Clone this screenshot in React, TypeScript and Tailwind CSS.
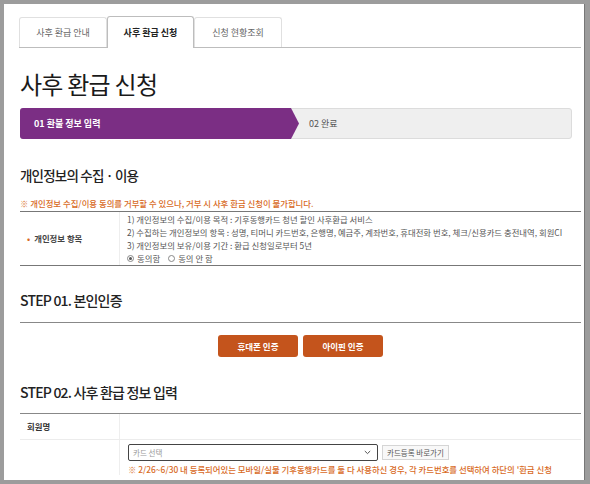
import React from "react";

const tabs = ["사후 환급 안내", "사후 환급 신청", "신청 현황조회"];

function Tabs() {
  return (
    <div className="mt-[12px] -ml-px flex items-end border-b border-[#bdbdbd]">
      {tabs.map((t, i) =>
        i === 1 ? (
          <div
            key={t}
            className="-mb-px flex h-[32px] w-[87px] items-center justify-center rounded-t-[3px] border border-b-0 border-[#bdbdbd] bg-white text-[9px] font-bold text-[#222]"
          >
            {t}
          </div>
        ) : (
          <div
            key={t}
            className="flex h-[30px] w-[88px] items-center justify-center rounded-t-[3px] border border-b-0 border-[#e0e0e0] bg-white text-[9px] text-[#666]"
          >
            {t}
          </div>
        )
      )}
    </div>
  );
}

function Steps() {
  return (
    <div className="relative mt-[9px] mr-[9px] flex h-[31px] items-center rounded-[3px] border border-[#dcdcdc] bg-[#efefef]">
      <div className="absolute -left-px -top-px flex h-[31px] w-[279px] items-center rounded-l-[3px] bg-[#7b2e84] pl-[14px] text-[9px] font-bold text-white [clip-path:polygon(0_0,calc(100%-8px)_0,100%_50%,calc(100%-8px)_100%,0_100%)]">
        01 환불 정보 입력
      </div>
      <div className="ml-[288px] text-[9px] text-[#555]">02 완료</div>
    </div>
  );
}

function Radio({ checked }: { checked?: boolean }) {
  return (
    <span className="mr-[3px] inline-flex h-[7px] w-[7px] items-center justify-center rounded-full border border-[#888] bg-white">
      {checked && <span className="h-[3px] w-[3px] rounded-full bg-[#555]" />}
    </span>
  );
}

export default function App() {
  return (
    <div className="h-[484px] w-[590px] bg-[#9c9c9c] pb-[4px] pl-[4px] pr-[5px] pt-[4px] font-['Noto_Sans_CJK_KR',sans-serif]">
      <div className="h-full w-full overflow-hidden border-r border-[#777] bg-white pl-[16px] pr-[3px]">
        <Tabs />

        <h1 className="mt-[21px] h-[30px] text-[24px] leading-[30px] tracking-[-0.75px] text-[#1a1a1a]">
          사후 환급 신청
        </h1>

        <Steps />

        <h2 className="mt-[26px] h-[20px] text-[13.5px] font-medium leading-[20px] tracking-[-0.8px] text-[#222]">
          개인정보의 수집 · 이용
        </h2>
        <p className="mt-[12px] h-[12px] text-[8.4px] font-medium leading-[12px] text-[#d86a1e]">
          ※ 개인정보 수집/이용 동의를 거부할 수 있으나, 거부 시 사후 환급 신청이 불가합니다.
        </p>

        <div className="mt-[2px] flex border-y border-[#777]">
          <div className="flex w-[100px] items-center border-r border-[#eee] pl-[7px] text-[8.4px] font-bold text-[#444]">
            <span className="mr-[4px] text-[#d86a1e]">•</span>개인정보 항목
          </div>
          <div className="pl-[7px] pt-[1px] text-[8.4px] leading-[13px] text-[#555]">
            <div>1) 개인정보의 수집/이용 목적 : 기후동행카드 청년 할인 사후환급 서비스</div>
            <div>
              2) 수집하는 개인정보의 항목 : 성명, 티머니 카드번호, 은행명, 예금주, 계좌번호, 휴대전화 번호, 체크/신용카드 충전내역, 회원CI
            </div>
            <div>3) 개인정보의 보유/이용 기간 : 환급 신청일로부터 5년</div>
            <div className="flex items-center">
              <Radio checked />
              <span className="mr-[8px]">동의함</span>
              <Radio />
              <span>동의 안 함</span>
            </div>
          </div>
        </div>

        <h2 className="mt-[24px] h-[20px] text-[14px] font-medium leading-[20px] tracking-[-0.8px] text-[#222]">
          STEP 01. 본인인증
        </h2>
        <div className="mt-[12px] border-b border-[#888]" />

        <div className="mt-[12px] flex justify-center gap-[5px]">
          <button className="h-[22px] w-[80px] rounded-[3px] bg-[#c4541c] text-[8.5px] font-bold text-white">
            휴대폰 인증
          </button>
          <button className="h-[22px] w-[80px] rounded-[3px] bg-[#c4541c] text-[8.5px] font-bold text-white">
            아이핀 인증
          </button>
        </div>

        <h2 className="mt-[25px] h-[20px] text-[14px] font-medium leading-[20px] tracking-[-0.8px] text-[#222]">
          STEP 02. 사후 환급 정보 입력
        </h2>
        <div className="mt-[11px] border-b border-[#888]" />

        <div className="flex h-[26px] border-b border-[#ececec]">
          <div className="flex w-[100px] items-center border-r border-[#eee] pl-[7px] text-[8.4px] font-bold text-[#333]">
            회원명
          </div>
          <div className="flex-1" />
        </div>

        <div className="flex">
          <div className="w-[100px] border-r border-[#eee]" />
          <div className="pl-[8px] pt-[4px]">
            <div className="flex items-center gap-[4px]">
              <div className="flex h-[17px] w-[250px] items-center justify-between rounded-[2px] border border-[#444] px-[4px] text-[7.5px] text-[#999]">
                <span>카드 선택</span>
                <svg width="7" height="5" viewBox="0 0 7 5" className="mr-[2px]">
                  <path d="M0.8 1l2.7 2.6L6.2 1" fill="none" stroke="#555" strokeWidth="1" />
                </svg>
              </div>
              <div className="flex h-[15px] items-center border border-[#d5d5d5] bg-[#f8f8f8] px-[4px] text-[7.5px] text-[#555]">
                카드등록 바로가기
              </div>
            </div>
            <p className="mt-[2px] h-[12px] whitespace-nowrap text-[8.4px] font-medium leading-[12px] text-[#d86a1e]">
              ※ 2/26~6/30 내 등록되어있는 모바일/실물 기후동행카드를 둘 다 사용하신 경우, 각 카드번호를 선택하여 하단의 '환급 신청
            </p>
          </div>
        </div>
      </div>
    </div>
  );
}
